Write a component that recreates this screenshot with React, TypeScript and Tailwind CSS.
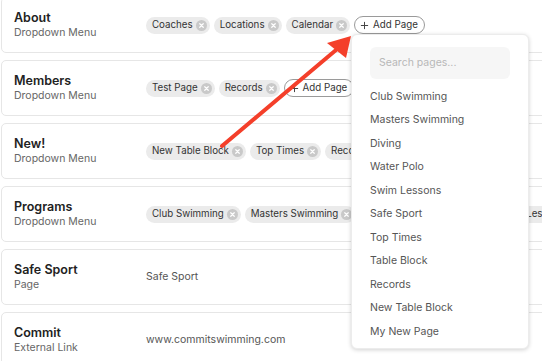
import React from "react";

const font = { fontFamily: "Inter, 'Noto Sans', sans-serif" };

function CloseDot() {
  return (
    <span className="inline-flex h-[11px] w-[11px] items-center justify-center rounded-full bg-[#c9c9c9]">
      <svg width="7" height="7" viewBox="0 0 8 8">
        <path d="M2 2 L6 6 M6 2 L2 6" stroke="#ffffff" strokeWidth="1.4" strokeLinecap="round" />
      </svg>
    </span>
  );
}

function Chip({ label }: { label: string }) {
  return (
    <span className="inline-flex h-[17px] shrink-0 items-center gap-[3px] whitespace-nowrap rounded-full bg-[#ebebeb] pl-[6px] pr-[3px] text-[9.75px] text-[#333]">
      {label}
      <CloseDot />
    </span>
  );
}

function AddPage() {
  return (
    <span className="inline-flex h-[18px] shrink-0 items-center gap-[4px] whitespace-nowrap rounded-full border border-[#9a9a9a] bg-white pl-[5px] pr-[6px] text-[9.75px] text-[#333]">
      <svg width="9" height="9" viewBox="0 0 10 10">
        <path d="M5 1 V9 M1 5 H9" stroke="#444" strokeWidth="1.1" />
      </svg>
      Add Page
    </span>
  );
}

type Row = { title: string; sub: string; chips?: string[]; add?: boolean; text?: string };

const rows: Row[] = [
  { title: "About", sub: "Dropdown Menu", chips: ["Coaches", "Locations", "Calendar"], add: true },
  { title: "Members", sub: "Dropdown Menu", chips: ["Test Page", "Records"], add: true },
  { title: "New!", sub: "Dropdown Menu", chips: ["New Table Block", "Top Times", "Records"], add: true },
  { title: "Programs", sub: "Dropdown Menu", chips: ["Club Swimming", "Masters Swimming", "Diving", "Water Polo", "Swim Lessons"], add: true },
  { title: "Safe Sport", sub: "Page", text: "Safe Sport" },
  { title: "Commit", sub: "External Link", text: "www.commitswimming.com" },
];

const items = [
  "Club Swimming",
  "Masters Swimming",
  "Diving",
  "Water Polo",
  "Swim Lessons",
  "Safe Sport",
  "Top Times",
  "Table Block",
  "Records",
  "New Table Block",
  "My New Page",
];

export default function App() {
  return (
    <div className="relative h-[361px] w-[542px] overflow-hidden bg-white" style={font}>
      <div className="-mt-[3px] flex flex-col gap-[7px] pl-[1px]">
        {rows.map((r) => (
          <div
            key={r.title}
            className="flex h-[56px] w-[700px] shrink-0 items-center overflow-hidden rounded-[5px] border border-[#e6e6e6] bg-white pl-[12px]"
          >
            <div className="flex w-[132px] shrink-0 flex-col">
              <span className="text-[12.5px] font-semibold leading-[15px] text-[#222]">{r.title}</span>
              <span className="text-[10.5px] leading-[15px] text-[#666]">{r.sub}</span>
            </div>
            {r.chips ? (
              <div className="flex items-center gap-[4px]">
                {r.chips.map((c) => (
                  <Chip key={c} label={c} />
                ))}
                {r.add && <AddPage />}
              </div>
            ) : (
              <span className="text-[10.5px] text-[#555]">{r.text}</span>
            )}
          </div>
        ))}
      </div>

      <div className="absolute left-[351px] top-[34px] flex h-[315px] w-[178px] flex-col rounded-[6px] border border-[#ececec] bg-white px-[18px] pt-[12px] shadow-[0_1px_4px_rgba(0,0,0,0.18)]">
        <div className="flex h-[32px] items-center rounded-[6px] bg-[#f6f6f6] px-[9px] text-[10.5px] text-[#b8b8b8]">
          Search pages...
        </div>
        <div className="mt-[6px] flex flex-col">
          {items.map((i) => (
            <div key={i} className="flex h-[23.5px] items-center text-[10.5px] text-[#555]">
              {i}
            </div>
          ))}
        </div>
      </div>

      <svg className="absolute left-0 top-0" width="542" height="361" viewBox="0 0 542 361">
        <line x1="222" y1="146" x2="336" y2="50" stroke="#f43f2a" strokeWidth="4" strokeLinecap="round" />
        <polygon points="351,36 327,43 346,58" fill="#f43f2a" />
      </svg>
    </div>
  );
}
